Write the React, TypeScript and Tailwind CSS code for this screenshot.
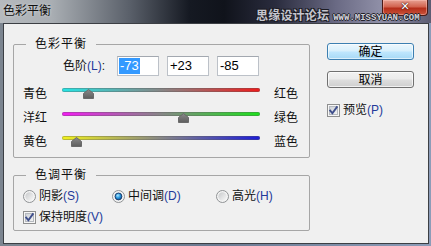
import React from "react";

const FONT = { fontFamily: '"Liberation Sans", "Noto Sans CJK SC", sans-serif' };

function Hot({ k }: { k: string }) {
  return <span className="text-[#23399a]">({k})</span>;
}

function CheckBox() {
  return (
    <svg width="13" height="13" viewBox="0 0 13 13" className="shrink-0">
      <defs>
        <linearGradient id="cbg" x1="0" y1="0" x2="1" y2="1">
          <stop offset="0" stopColor="#cbcfd5" />
          <stop offset="1" stopColor="#f6f6f6" />
        </linearGradient>
      </defs>
      <rect x="0.5" y="0.5" width="12" height="12" fill="#f6f6f6" stroke="#8e8f8f" />
      <rect x="2.5" y="2.5" width="8" height="8" fill="url(#cbg)" stroke="#b5b9bf" />
      <path d="M3.2 6.6 L5.4 9.3 L9.8 3.2" fill="none" stroke="#3f4f8c" strokeWidth="1.9" strokeLinecap="square" />
    </svg>
  );
}

function Radio({ on }: { on?: boolean }) {
  return (
    <svg width="13" height="13" viewBox="0 0 13 13" className="shrink-0">
      <defs>
        <linearGradient id="rbg" x1="0" y1="0" x2="1" y2="1">
          <stop offset="0" stopColor="#c8cacc" />
          <stop offset="1" stopColor="#f8f8f8" />
        </linearGradient>
        <radialGradient id="rdot" cx="0.4" cy="0.35" r="0.7">
          <stop offset="0" stopColor="#aee8ff" />
          <stop offset="0.5" stopColor="#2a9ae0" />
          <stop offset="1" stopColor="#0c4a8a" />
        </radialGradient>
      </defs>
      <circle cx="6.5" cy="6.5" r="6" fill="#f4f4f4" stroke="#8f9294" />
      <circle cx="6.5" cy="6.5" r="4.2" fill="url(#rbg)" />
      {on && <circle cx="6.5" cy="6.5" r="3.4" fill="url(#rdot)" stroke="#1b3a6b" strokeWidth="0.9" />}
    </svg>
  );
}

function Thumb() {
  return (
    <svg width="11" height="10" viewBox="0 0 11 10">
      <defs>
        <linearGradient id="thg" x1="0" y1="0" x2="0" y2="1">
          <stop offset="0" stopColor="#8a8a8a" />
          <stop offset="1" stopColor="#5e5e5e" />
        </linearGradient>
      </defs>
      <polygon points="5.5,0.5 10.5,4.5 10.5,9.5 0.5,9.5 0.5,4.5" fill="url(#thg)" stroke="#6a6a6a" strokeWidth="1" />
    </svg>
  );
}

type Row = { left: string; right: string; value: number; grad: string };

const rows: Row[] = [
  { left: "青色", right: "红色", value: -73, grad: "bg-[linear-gradient(to_right,#26e4e4,#868686_50%,#ee1c1c)]" },
  { left: "洋红", right: "绿色", value: 23, grad: "bg-[linear-gradient(to_right,#f21cf2,#868686_50%,#1ce01c)]" },
  { left: "黄色", right: "蓝色", value: -85, grad: "bg-[linear-gradient(to_right,#f2f21c,#868686_50%,#1c1cd8)]" },
];

function SliderRow({ r }: { r: Row }) {
  const pos = ((r.value + 100) / 200) * 198;
  return (
    <div className="flex h-[24px] items-center pl-[9px]">
      <div className="w-[39px] leading-[16px]">{r.left}</div>
      <div className="relative h-[12px] w-[198px]">
        <div className={`h-[4px] w-full rounded-[2px] ${r.grad} shadow-[inset_0_0_0_1px_rgba(90,90,90,0.35)]`} />
        <div className="absolute top-[1px]" style={{ left: pos - 5.5 }}>
          <Thumb />
        </div>
      </div>
      <div className="ml-[14px] leading-[16px]">{r.right}</div>
    </div>
  );
}

function Input({ children }: { children: React.ReactNode }) {
  return (
    <div className="flex h-[20px] w-[42px] items-center border border-[#bcc1c8] border-t-[#a3a8b0] bg-white pl-[1px] text-[13px] leading-[16px] text-black">
      {children}
    </div>
  );
}

export default function App() {
  return (
    <div
      className="flex h-[246px] w-[431px] flex-col overflow-hidden bg-[linear-gradient(to_right,#7c8590,#6c7a92_50%,#8c9cb8)] text-[12px] text-[#111]"
      style={FONT}
    >
      {/* Title bar */}
      <div className="relative flex h-[23px] shrink-0 items-start bg-[linear-gradient(to_right,#b6babe_0%,#a9aeb3_12%,#5a606a_30%,#151922_44%,#10131b_52%,#2a2c3e_64%,#6a6a84_78%,#8e8ea6_88%,#7a7a92_94%,#5c5c72_100%)]">
        <div className="pl-[3px] pt-[3px] text-[12px] leading-[16px] text-[#101010] [text-shadow:0_0_3px_rgba(255,255,255,0.6)]">
          色彩平衡
        </div>
        <div className="flex-1" />
        <div className="mr-[3px] flex h-[16px] w-[46px] items-start justify-center rounded-b-[4px] border border-t-0 border-[#4a1a16] bg-[linear-gradient(to_bottom,#e7a192_0%,#d2634f_45%,#b52e1a_55%,#c8553c_100%)] pt-[1px] shadow-[inset_0_0_0_1px_rgba(255,200,190,0.45)]">
          <span className="font-['DejaVu_Sans'] text-[11px] font-bold leading-[11px] text-white [text-shadow:0_0_1px_#3a0a04,0_0_2px_#3a0a04]">
            ✕
          </span>
        </div>
        <div className="pointer-events-none absolute left-[256px] top-[7px] flex items-end gap-[4px]">
          <span className="font-['Noto_Sans_CJK_SC'] text-[12px] font-bold leading-[15px] tracking-[0.2px] text-[#c6c6ce] [text-shadow:1px_1px_0_#1c1c24,-1px_-1px_0_#1c1c24,1px_-1px_0_#1c1c24,-1px_1px_0_#1c1c24]">
            思缘设计论坛
          </span>
          <span className="font-['Liberation_Mono'] text-[9px] font-bold leading-[8px] text-[#d2d2da] [text-shadow:1px_0_0_#22222a,-1px_0_0_#22222a,0_1px_0_#22222a,0_-1px_0_#22222a]">
            WWW.MISSYUAN.COM
          </span>
        </div>
      </div>

      {/* Body with frame */}
      <div className="flex flex-1 pb-[2px] pl-[3px] pr-[2px]">
        <div className="flex flex-1 border border-[#3c3f44] bg-[#f0f0f0]">
          {/* Left column */}
          <div className="ml-[9px] flex flex-col pt-[12px]">
            <fieldset className="w-[297px] rounded-[2px] border border-[#a6a6a6] px-0 pb-[3px] pt-[4px]">
              <legend className="ml-[12px] px-[9px] text-[12px] leading-[16px] tracking-[1px]">色彩平衡</legend>
              <div className="flex h-[20px] items-center">
                <div className="ml-[49px] w-[54px] leading-[16px]">
                  色阶<Hot k="L" />:
                </div>
                <div className="flex gap-[8px]">
                  <Input>
                    <span className="bg-[#3399ff] px-[1px] text-white">-73</span>
                  </Input>
                  <Input>
                    <span className="px-[1px]">+23</span>
                  </Input>
                  <Input>
                    <span className="px-[1px]">-85</span>
                  </Input>
                </div>
              </div>
              <div className="mt-[6px]">
                {rows.map((r) => (
                  <SliderRow key={r.left} r={r} />
                ))}
              </div>
            </fieldset>

            <fieldset className="mt-[9px] w-[297px] rounded-[2px] border border-[#a6a6a6] px-0 pb-[5px] pt-[5px]">
              <legend className="ml-[12px] px-[9px] text-[12px] leading-[16px] tracking-[1px]">色调平衡</legend>
              <div className="flex h-[16px] items-center pl-[9px]">
                <div className="flex w-[89px] items-center gap-[3px]">
                  <Radio />
                  <span className="leading-[16px]">
                    阴影<Hot k="S" />
                  </span>
                </div>
                <div className="flex w-[104px] items-center gap-[3px]">
                  <Radio on />
                  <span className="leading-[16px]">
                    中间调<Hot k="D" />
                  </span>
                </div>
                <div className="flex items-center gap-[3px]">
                  <Radio />
                  <span className="leading-[16px]">
                    高光<Hot k="H" />
                  </span>
                </div>
              </div>
              <div className="mt-[5px] flex h-[16px] items-center gap-[3px] pl-[9px]">
                <CheckBox />
                <span className="leading-[16px]">
                  保持明度<Hot k="V" />
                </span>
              </div>
            </fieldset>
          </div>

          {/* Right column */}
          <div className="ml-[17px] flex flex-col pt-[19px]">
            <button className="flex h-[17px] w-[87px] items-center justify-center rounded-[3px] border border-[#3c7fb1] bg-[linear-gradient(to_bottom,#ecf7fd_0%,#d9f0fc_45%,#bee6fd_55%,#a7d9f5_100%)] text-[12px] leading-[14px] text-black shadow-[inset_0_0_0_1px_rgba(255,255,255,0.6)]">
              确定
            </button>
            <button className="mt-[11px] flex h-[17px] w-[87px] items-center justify-center rounded-[3px] border border-[#707070] bg-[linear-gradient(to_bottom,#f2f2f2_0%,#ebebeb_45%,#dddddd_55%,#cfcfcf_100%)] text-[12px] leading-[14px] text-black shadow-[inset_0_0_0_1px_rgba(255,255,255,0.7)]">
              取消
            </button>
            <div className="mt-[14px] flex h-[16px] items-center gap-[3px]">
              <CheckBox />
              <span className="leading-[16px]">
                预览<Hot k="P" />
              </span>
            </div>
          </div>
        </div>
      </div>
    </div>
  );
}
